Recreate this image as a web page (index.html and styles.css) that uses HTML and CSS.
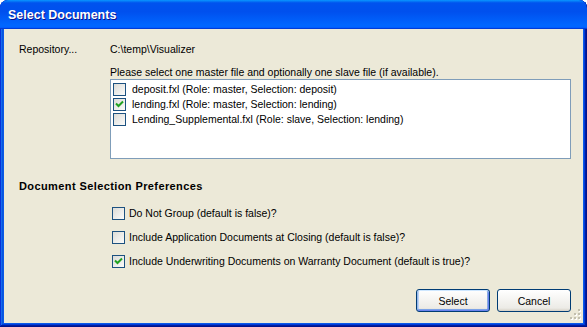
FILE: index.html
```html
<!DOCTYPE html>
<html>
<head>
<meta charset="utf-8">
<link rel="stylesheet" href="styles.css">
</head>
<body>
<div class="window">
  <div class="titlebar"><span class="title">Select Documents</span></div>
  <div class="content">
    <div class="repo-row">
      <span class="label">Repository...</span>
      <span class="path">C:\temp\Visualizer</span>
    </div>
    <div class="files">
      <div class="hint">Please select one master file and optionally one slave file (if available).</div>
      <div class="listbox">
        <div class="item"><span class="cb"></span><span>deposit.fxl (Role: master, Selection: deposit)</span></div>
        <div class="item"><span class="cb checked"><svg width="11" height="11" viewBox="0 0 11 11"><path d="M2 4.5 L4.5 7 L9 2.5" fill="none" stroke="#21a121" stroke-width="2"/></svg></span><span>lending.fxl (Role: master, Selection: lending)</span></div>
        <div class="item"><span class="cb"></span><span>Lending_Supplemental.fxl (Role: slave, Selection: lending)</span></div>
      </div>
    </div>
    <div class="section-title">Document Selection Preferences</div>
    <div class="prefs">
      <div class="pref"><span class="cb"></span><span>Do Not Group (default is false)?</span></div>
      <div class="pref"><span class="cb"></span><span>Include Application Documents at Closing (default is false)?</span></div>
      <div class="pref"><span class="cb checked"><svg width="11" height="11" viewBox="0 0 11 11"><path d="M2 4.5 L4.5 7 L9 2.5" fill="none" stroke="#21a121" stroke-width="2"/></svg></span><span>Include Underwriting Documents on Warranty Document (default is true)?</span></div>
    </div>
    <div class="buttons">
      <button class="btn default">Select</button>
      <button class="btn">Cancel</button>
    </div>
  </div>
  <svg class="grip" width="12" height="12" viewBox="0 0 12 12">
    <rect x="9" y="1" width="2" height="2" fill="#fff"/><rect x="8" y="0" width="2" height="2" fill="#c2bfae"/>
    <rect x="5" y="5" width="2" height="2" fill="#fff"/><rect x="4" y="4" width="2" height="2" fill="#c2bfae"/>
    <rect x="9" y="5" width="2" height="2" fill="#fff"/><rect x="8" y="4" width="2" height="2" fill="#c2bfae"/>
    <rect x="1" y="9" width="2" height="2" fill="#fff"/><rect x="0" y="8" width="2" height="2" fill="#c2bfae"/>
    <rect x="5" y="9" width="2" height="2" fill="#fff"/><rect x="4" y="8" width="2" height="2" fill="#c2bfae"/>
    <rect x="9" y="9" width="2" height="2" fill="#fff"/><rect x="8" y="8" width="2" height="2" fill="#c2bfae"/>
  </svg>
</div>
</body>
</html>
```

FILE: styles.css
```css
html, body {
  margin: 0;
  padding: 0;
  background: #ffffff;
}
body {
  font-family: "Liberation Sans", Arial, sans-serif;
  font-size: 10.5px;
  line-height: 13px;
  color: #000;
}
.window {
  position: relative;
  width: 587px;
  height: 327px;
  box-sizing: border-box;
  background: #ece9d8;
  border-radius: 8px 8px 0 0;
  display: flex;
  flex-direction: column;
  box-shadow: inset -1px -1px #00138c, inset 1px 1px #0831d9,
              inset -2px -2px #001ea0, inset 2px 2px #166aee,
              inset -3px -3px #003bda, inset 3px 3px #0855dd,
              inset -4px -4px #0a5ae8, inset 4px 4px #0a5ae8;
  overflow: hidden;
}
.titlebar {
  height: 29px;
  flex: none;
  box-sizing: border-box;
  padding: 1px 0 0 8px;
  display: flex;
  align-items: center;
  border-radius: 8px 8px 0 0;
  background: linear-gradient(180deg, #0997ff 0%, #0053ee 10%, #0050ee 40%, #0066ff 86%, #0066ff 92%, #005bff 95%, #003dd7 97%, #003dd7 100%);
}
.title {
  color: #fff;
  font-weight: bold;
  font-size: 12.5px;
  text-shadow: 1px 1px #0f1089;
}
.content {
  flex: 1;
  display: flex;
  flex-direction: column;
  padding: 14px 16px 0 19px;
}
.repo-row {
  display: flex;
}
.label {
  width: 91px;
  flex: none;
}
.files {
  margin: 10px 0 0 91px;
}
.listbox {
  height: 80px;
  box-sizing: border-box;
  background: #fff;
  border: 1px solid #7f9db9;
  padding: 2px 0 0 2px;
}
.item {
  height: 15px;
  display: flex;
  align-items: center;
  gap: 6px;
}
.cb {
  width: 13px;
  height: 13px;
  box-sizing: border-box;
  border: 1px solid #1c5180;
  background: linear-gradient(135deg, #dcdcd7 0%, #fbfbfa 100%);
  flex: none;
  display: flex;
  align-items: center;
  justify-content: center;
}
.section-title {
  font-weight: bold;
  font-size: 11px;
  letter-spacing: 0.4px;
  margin-top: 21px;
}
.prefs {
  margin: 14px 0 0 93px;
  display: flex;
  flex-direction: column;
  gap: 11px;
}
.pref {
  height: 13px;
  display: flex;
  align-items: center;
  gap: 4px;
}
.buttons {
  margin-top: 21px;
  display: flex;
  justify-content: flex-end;
  gap: 7px;
}
.btn {
  width: 74px;
  height: 23px;
  box-sizing: border-box;
  font-family: "Liberation Sans", Arial, sans-serif;
  font-size: 10.5px;
  color: #000;
  border: 1px solid #003c74;
  border-radius: 3px;
  background: linear-gradient(180deg, #ffffff 0%, #ecebe6 86%, #d6d0c5 100%);
  padding: 0;
}
.btn.default {
  box-shadow: inset 0 1px #cee7ff, inset -1px -1px #6982ee, inset 1px 0 #98b8ea, inset 0 -2px #7ba2e7, inset 2px 0 #bcd4f6, inset -2px 0 #89ade4;
}
.grip {
  position: absolute;
  right: 5px;
  bottom: 6px;
}
```
